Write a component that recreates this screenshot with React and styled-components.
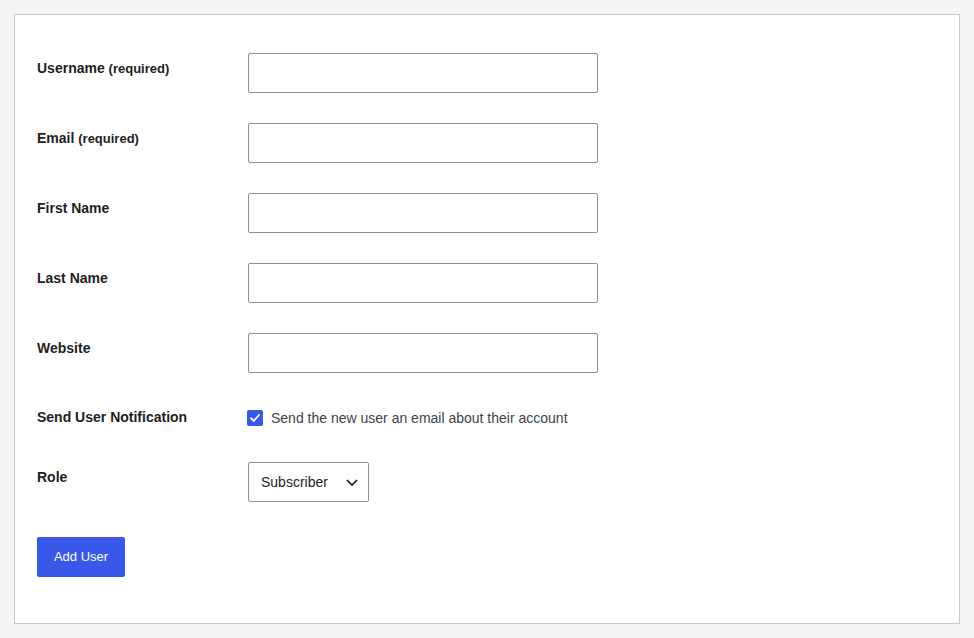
import React from "react";
import styled, { createGlobalStyle } from "styled-components";

const Global = createGlobalStyle`
  html, body { margin: 0; padding: 0; }
  body {
    background: #f4f5f4;
    font-family: "Liberation Sans", Arial, sans-serif;
    color: #1e1e1e;
  }
`;

const Page = styled.div`
  padding: 14px;
`;

const Panel = styled.form`
  background: #fff;
  border: 1px solid #c8c9c8;
  padding: 23px 0 46px 22px;
  box-sizing: border-box;
  width: 946px;
`;

const Row = styled.div`
  display: flex;
  align-items: flex-start;
  padding: 15px 0;
`;

const Label = styled.label`
  width: 211px;
  flex: none;
  padding-top: ${(p) => (p.$tight ? "4px" : "5px")};
  font-size: 14px;
  line-height: 21px;
  font-weight: 700;
  color: #1e1e1e;
`;

const Small = styled.span`
  font-size: 13px;
`;

const Input = styled.input`
  width: 350px;
  height: 40px;
  box-sizing: border-box;
  border: 1px solid #8c8f94;
  border-radius: 2px;
  background: #fff;
  font-family: inherit;
  font-size: 14px;
  padding: 0 8px;
  margin: 0;
`;

const CheckWrap = styled.label`
  display: flex;
  align-items: center;
  height: 29px;
  gap: 8px;
  margin-left: -1px;
  font-size: 14px;
  color: #3c434a;
`;

const Box = styled.span`
  width: 16px;
  height: 16px;
  border-radius: 2px;
  background: #3858e9;
  display: flex;
  align-items: center;
  justify-content: center;
`;

const Select = styled.div`
  width: 121px;
  height: 40px;
  box-sizing: border-box;
  border: 1px solid #8c8f94;
  border-radius: 2px;
  display: flex;
  align-items: center;
  justify-content: space-between;
  padding: 0 9px 1px 12px;
  font-size: 14px;
  color: #1e1e1e;
`;

const Button = styled.button`
  margin-top: 20px;
  width: 88px;
  height: 40px;
  background: #3858e9;
  color: #fff;
  border: none;
  border-radius: 2px;
  font-family: inherit;
  font-size: 13px;
  padding: 0 0 1px;
`;

const fields = [
  ["Username", true],
  ["Email", true],
  ["First Name", false],
  ["Last Name", false],
  ["Website", false],
];

export default function App() {
  return (
    <Page>
      <Global />
      <Panel onSubmit={(e) => e.preventDefault()}>
        {fields.map(([name, req]) => (
          <Row key={name}>
            <Label>
              {name} {req && <Small>(required)</Small>}
            </Label>
            <Input type="text" />
          </Row>
        ))}
        <Row>
          <Label $tight>Send User Notification</Label>
          <CheckWrap>
            <Box>
              <svg width="12" height="12" viewBox="0 0 12 12">
                <path d="M2 6.2 L4.8 9 L10 3" fill="none" stroke="#fff" strokeWidth="1.8" strokeLinecap="round" strokeLinejoin="round" />
              </svg>
            </Box>
            Send the new user an email about their account
          </CheckWrap>
        </Row>
        <Row>
          <Label>Role</Label>
          <Select>
            Subscriber
            <svg width="14" height="14" viewBox="0 0 14 14">
              <path d="M2 5 L7 10 L12 5" fill="none" stroke="#1e1e1e" strokeWidth="1.7" />
            </svg>
          </Select>
        </Row>
        <Button type="submit">Add User</Button>
      </Panel>
    </Page>
  );
}
